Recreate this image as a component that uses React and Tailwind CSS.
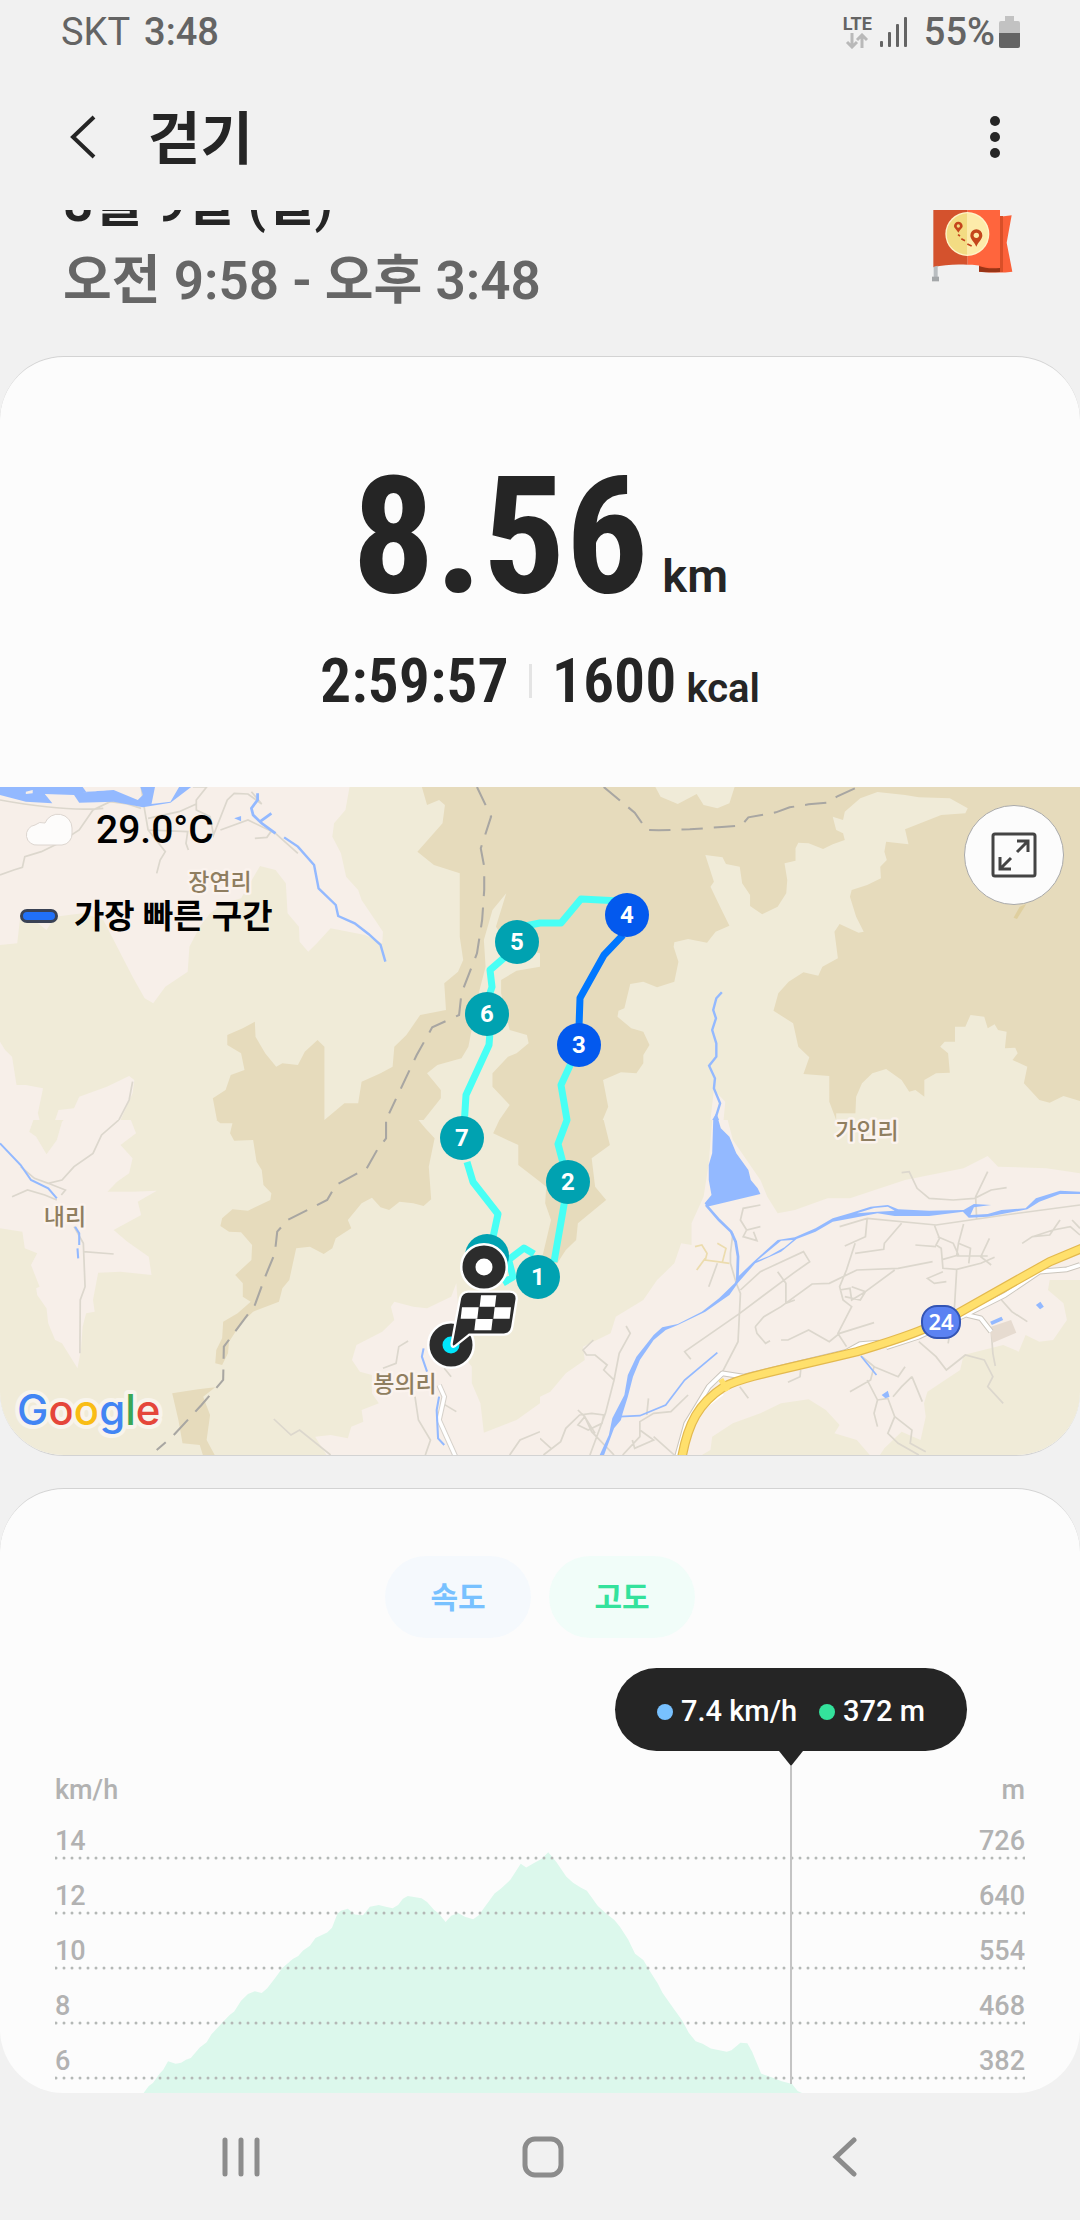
import React from "react";

const SANS = "font-[Roboto,'Noto_Sans_CJK_KR',sans-serif]";

const LIGHT = "#f0ebd8";
const TAN = "#e6dbbc";
const PINK = "#f7efe9";
const WATER = "#93b9ff";
const ROAD = "#dcd7cd";

function StatusBar() {
  return (
    <div className="flex h-16 shrink-0 items-center justify-between pr-[60px] pl-[61px] text-[38px] leading-none text-[#646464]">
      <div className="flex gap-[14px]">
        <span>SKT</span>
        <span className="font-medium">3:48</span>
      </div>
      <div className="flex items-center gap-2">
        <div className="flex flex-col items-center">
          <span className="text-lg leading-[18px] font-bold">LTE</span>
          <svg className="h-4 w-6" viewBox="0 0 24 16" fill="none" stroke="#b9b9b9" strokeWidth="3">
            <path d="M7 0v13M2 9l5 5 5-5M17 15V3M12 7l5-5 5 5" />
          </svg>
        </div>
        <svg className="h-8 w-7" viewBox="0 0 28 32" fill="#646464">
          <rect x="0" y="25" width="3" height="6" rx="1" />
          <rect x="8" y="16" width="3" height="15" rx="1" />
          <rect x="16" y="8" width="3" height="23" rx="1" />
          <rect x="24" y="1" width="3" height="30" rx="1" />
        </svg>
        <div className="flex items-center gap-1 pl-2">
          <span className="font-medium">55%</span>
          <svg className="h-8 w-[21px]" viewBox="0 0 21 32">
            <path d="M6 0h9v5h4a2 2 0 0 1 2 2v10H0V7a2 2 0 0 1 2-2h4z" fill="#c2c2c2" />
            <path d="M0 17h21v13a2 2 0 0 1-2 2H2a2 2 0 0 1-2-2z" fill="#646464" />
          </svg>
        </div>
      </div>
    </div>
  );
}

function AppBar() {
  return (
    <header className="flex h-[146px] shrink-0 items-start justify-between pr-[65px] pl-[56px] text-[#252525]">
      <div className="flex items-start gap-[38px]">
        <button type="button" aria-label="뒤로" className="mt-[46px] flex h-[54px] w-[54px] items-center justify-center">
          <svg className="h-[44px] w-[28px]" viewBox="0 0 28 44" fill="none" stroke="currentColor" strokeWidth="4">
            <path d="M25 2L4 22l21 20" />
          </svg>
        </button>
        <h1 className="mt-[36px] text-[57px] leading-[80px] font-semibold">걷기</h1>
      </div>
      <button type="button" aria-label="더보기" className="mt-[46px] flex h-[54px] w-[40px] items-center justify-center">
        <svg className="h-[44px] w-[12px]" viewBox="0 0 12 44" fill="currentColor">
          <circle cx="6" cy="6" r="5" />
          <circle cx="6" cy="22" r="5" />
          <circle cx="6" cy="38" r="5" />
        </svg>
      </button>
    </header>
  );
}

function Flag() {
  return (
    <svg className="h-[72px] w-[81px]" viewBox="96 60 243 216">
      <path d="M300 80l35-4-15 82 17 87c-30 4-60 3-100 0v-30h63z" fill="#fb6139" />
      <path d="M300 78h9v168h-9z" fill="#d94f28" />
      <path d="M237 228c20 8 40 8 63 6v12c-25 2-45 1-63-1z" fill="#993416" />
      <path d="M100 60h103v164c-40-2-70 0-103 8z" fill="#d4522d" />
      <path d="M203 60h97v174c-30-2-60-10-97-10z" fill="#ff653d" />
      <path d="M101 230l12-3v36h-12z" fill="#b9bdc0" />
      <path d="M96 260h21v14H96z" fill="#a4a7a9" />
      <circle cx="202" cy="132" r="66" fill="#fff3c8" />
      <path d="M202 70a62 62 0 0 0 0 124z" fill="#f3dc83" />
      <path d="M202 70a62 62 0 0 1 0 124z" fill="#fdebaa" />
      <path d="M175 128c-6-10-13-14-13-20a13 13 0 0 1 26 0c0 6-7 10-13 20z" fill="#c4461c" />
      <circle cx="175" cy="108" r="5" fill="#f3dc83" />
      <path d="M229 170c-9-18-18-22-18-34a18 18 0 0 1 36 0c0 12-9 16-18 34z" fill="#c4461c" />
      <circle cx="229" cy="136" r="8" fill="#fdebaa" />
      <path d="M174 134l6 4M184 146l11 6M202 162l13 6" stroke="#c4461c" strokeWidth="5" />
    </svg>
  );
}

function Heading() {
  return (
    <section className="-mt-[46px] flex shrink-0 items-end justify-between pr-[67px] pb-[36px] pl-[63px]">
      <div className="text-[53px] leading-[78px] font-semibold">
        <p className="text-[#252525]">8월 9일 (일)</p>
        <p className="text-[#666666]">오전 9:58 - 오후 3:48</p>
      </div>
      <div className="pb-[38px]">
        <Flag />
      </div>
    </section>
  );
}

function Summary() {
  return (
    <div className="flex flex-col items-center pt-[96px] pb-[60px] text-[#252525]">
      <div className="flex items-baseline gap-[14px]">
        <span className="font-['Roboto_Condensed',Roboto,sans-serif] text-[164px] leading-[166px] font-bold">8.56</span>
        <span className="text-[47px] leading-none font-semibold">km</span>
      </div>
      <div className="mt-[16px] flex items-center gap-[20px] font-semibold">
        <span className="font-['Roboto_Condensed',Roboto,sans-serif] text-[62px] leading-[92px]">2:59:57</span>
        <span className="h-[34px] w-[3px] bg-[#e4e4e4]" />
        <span className="flex items-baseline gap-[10px]">
          <span className="font-['Roboto_Condensed',Roboto,sans-serif] text-[62px] leading-[92px]">1600</span>
          <span className="text-[40px] leading-none">kcal</span>
        </span>
      </div>
    </div>
  );
}

function Tile({ x, y, height, viewHeight, top = 0, children }) {
  return (
    <svg x={x} y={y} width="540" height={height} viewBox={`0 ${top} 1568 ${viewHeight}`} preserveAspectRatio="none" fill="none">
      {children}
    </svg>
  );
}

function Terrain() {
  return (
    <>
      <Tile x="0" y="0" height="333" top={21} viewHeight={999}>
        <rect width="1568" height="1020" fill={LIGHT} />
        <path fill={PINK} d="M0 21H1015L1003 90 970 130 965 170 990 220 1005 290 1040 330 1050 360 1112 455 1110 490 1060 465 960 445 920 490 895 515 870 485 868 440 835 400 830 310 800 270 755 258 700 355 650 370 610 400 580 440 550 500 545 575 480 620 445 670 420 655 385 590 355 530 330 480 300 420 240 400 160 410 135 450 110 430 60 400 50 490 0 495z" />
        <path fill={PINK} d="M0 785L15 810 35 830 48 915 75 915 125 925 110 1000 115 1020 0 1020zM160 1020L170 990 215 985 230 950 310 920 375 888 390 900 385 940 350 1020z" />
        <path fill={TAN} d="M1225 21L1240 75 1275 60 1292 75 1285 130 1212 215 1260 255 1335 280 1335 470 1345 540 1330 575 1290 610 1295 690 1220 705 1180 765 1145 800 1140 860 1105 880 1050 905 1040 970 1000 970 942 1020 942 800 922 780 885 815 865 855 820 850 802 860 770 820 742 770 740 725 705 745 660 765 660 795 700 820 710 870 670 885 655 930 618 955 630 1020H1568V21z" />
        <path fill={LIGHT} d="M1470 340L1430 390 1405 480 1410 560 1390 640 1360 800 1340 835 1270 855 1240 880 1280 930 1280 955 1230 1020H1450L1480 975 1430 920 1430 880 1475 830 1500 820 1535 790 1530 765 1480 750 1455 640 1455 600 1500 572 1568 560V520L1480 500 1440 440z" />
        <g stroke={ROAD} strokeWidth="5">
          <path d="M0 60C80 75 200 95 300 85M0 285L40 270 65 262 72 230 120 215 170 190 230 150 270 90 320 65 370 72 410 85M410 21L420 90 430 150 480 215 465 240 455 280M430 150L545 155 540 190 547 210M560 21L600 21 570 60 570 90 610 110 620 165 660 60 680 40 720 42 760 72 730 35M640 150L720 120 800 160 865 220M740 175L775 172 790 150M430 115L520 95 570 72M385 905L375 960 345 1020" />
        </g>
        <path fill={WATER} d="M0 21H240L250 35 330 30 400 60 415 45 408 21H450L440 72 495 65 520 21H555L495 68 415 82 330 65 230 68 215 45 130 42 152 70 75 65 0 45z" />
        <path fill={PINK} d="M235 38L300 30 325 21H405L400 45 380 38 330 28zM75 35L95 30 95 40 75 42z" />
        <path fill={WATER} d="M680 115l20-7v16z" />
        <path stroke={WATER} strokeWidth="8" d="M748 40V60L730 85 735 105 760 130 800 160M755 125L788 100" />
        <path stroke={WATER} strokeWidth="7" d="M825 172L865 200 912 255 925 325 975 375 982 408 1030 430 1070 462 1105 495 1119 545" />
        <path stroke="#a8a6a2" strokeWidth="6" strokeDasharray="60 34" d="M1385 21L1426 110 1396 205 1406 260V330L1400 420 1385 520 1340 640 1333 705 1255 742 1210 825 1130 1000" />
      </Tile>

      <Tile x="540" y="0" height="333" top={21} viewHeight={999}>
        <rect width="1568" height="1020" fill={TAN} />
        <path fill={LIGHT} d="M335 21L350 50 400 72 455 42 475 75 515 85 550 70 565 21z" />
        <path fill={LIGHT} d="M850 110L880 120 885 95 930 55 980 36 1060 45 1100 52 1190 55 1242 85 1235 100 1165 105 1060 148 1070 193 1005 185 1000 215 1007 240 988 260 990 295 950 315 905 330 900 350 918 410 940 455 925 458 870 432 855 455 865 535 820 560 808 587 765 577 722 605 692 640 678 692 735 730 750 800 782 832 765 882 840 888 840 965 860 1020H915L918 950 935 910 965 880 1005 867 1050 900 1072 935 1090 930 1116 950V900L1150 880 1190 878 1185 820 1162 800 1175 785H1205V740H1235L1250 705 1290 710 1300 745 1320 733 1330 750 1355 755 1350 805 1380 803 1387 820 1372 840 1415 860 1405 910 1450 960 1480 968 1520 948 1568 963V1020H182L198 980 183 900 235 877 280 880 300 850V825L318 795 300 755 265 745 225 710 228 692 245 685 262 612 300 605 340 622 390 605 402 545 388 500 390 487 430 477 485 488 510 455 550 437 525 385 495 320 505 305 480 225 530 232 540 252 580 260 587 310 610 345V378L645 403 690 380 715 340 718 300 710 250 742 242V205L750 188 780 190 822 207 850 193 885 180 880 160 860 150z" />
        <path fill={LIGHT} d="M860 1000H920V1020H860z" />
        <path fill={PINK} d="M505 930L538 965 533 1020H495z" />
        <path stroke={WATER} strokeWidth="7" d="M528 637L512 655 503 690 511 715 500 750 512 790V830L491 857 508 895 505 925 523 970 508 1020" />
        <path fill={WATER} d="M500 1020L512 1000 520 1020z" />
        <path fill="#dfcf9f" d="M1412 372L1385 417 1375 413 1393 380z" />
        <path stroke="#a8a6a2" strokeWidth="6" strokeDasharray="62 32" d="M185 21L275 98 310 150 345 151 435 148 528 141 585 137 605 112 685 97 725 82 780 73 835 68 865 48 925 20" />
      </Tile>

      <Tile x="0" y="333" height="336" viewHeight={1008}>
        <rect width="1568" height="1050" fill={LIGHT} />
        <path fill={PINK} d="M0 0H97L85 35 105 50 135 103 165 60 180 5 185 0H380L395 40 350 75 385 115 375 160 340 185 312 215 385 215 455 212 400 245 410 285 330 330 370 365 432 410 440 465 350 455 285 458 270 540 275 575 250 580 240 620 235 690 225 745 180 670 160 660 140 610 135 565 108 525 105 505 115 500 90 435 108 400 72 385 65 335 0 325z" />
        <path fill={TAN} d="M628 0L640 10 675 10 668 40 680 62 735 60 745 125 760 150 765 195 788 220 785 240 720 272 675 268 645 295 640 318 665 335 700 337 732 375 730 420 683 465 705 490V530L728 545 690 580 648 605 645 655 628 690 625 730 645 735 662 700 665 665 700 610 735 575 810 545 820 505 840 480 860 385 900 380 940 402 965 385 975 355 1020 325 1010 300 1050 250 1080 233 1105 262 1130 270 1160 245 1200 250 1230 258 1252 238 1245 140 1262 55 1235 25 1215 0z" />
        <path fill={TAN} d="M1450 0L1432 40 1505 75V135L1568 185V0zM500 820L575 808 625 802 590 830 610 885 600 960 625 1008H590L580 975 530 970 518 900z" />
        <path fill={PINK} d="M1325 490L1310 530 1240 565 1200 560 1145 545 1135 560 1145 600 1110 635 1035 675 1022 720 1045 755 1080 765V820L1100 850 1050 870 1055 905 1020 920 1010 955 960 945 915 950 950 1008H1568V850L1500 900 1405 938 1395 850 1370 790V740L1340 700z" />
        <g stroke={ROAD} strokeWidth="5">
          <path d="M345 0L295 45 270 100 215 140 180 180 140 190 100 175 60 140M35 230L80 210 130 225 165 240M140 190L190 210 178 225M215 320L242 370 247 500 233 540 232 700M242 395L330 402M795 897L845 945 870 930 960 1005M1185 663L1158 680 1150 730 1112 745M1205 830L1215 900 1250 960 1235 1005M1290 745L1310 770M1285 850L1325 875M1480 1005L1510 960 1568 935" />
          <path strokeWidth="16" stroke="#d6d1ca" d="M1275 795L1290 830 1275 900 1322 1008" />
          <path strokeWidth="10" stroke="#fff" d="M1275 795L1290 830 1275 900 1322 1008" />
        </g>
        <path stroke={WATER} strokeWidth="6" d="M0 70L60 135 90 180 140 205 165 235M218 320L230 340V375M225 385L227 415M1230 685L1225 710 1240 755M1275 830L1268 870 1272 955 1290 975" />
        <path stroke="#a8a6a2" strokeWidth="6" strokeDasharray="62 32" d="M1121 5V55L1095 90 1065 145 975 195 950 240 835 300 805 335 798 400 770 470 740 555 650 680 648 780 585 855 500 950 455 990" />
      </Tile>

      <Tile x="540" y="333" height="336" viewHeight={1008}>
        <rect width="1568" height="1050" fill={LIGHT} />
        <path fill={TAN} d="M0 0H185L203 75 150 115 160 200 192 240 110 310 105 360 75 390 50 430 0 440 32 300 15 250 18 200 0 185z" />
        <path fill={PINK} d="M0 830L30 815 75 760 130 720 125 680 205 640 220 590 300 540 340 480 390 430 410 370 440 375V310L475 230 490 130 500 0H545L560 60 640 180 660 230 690 280 740 270 835 235 900 235 1060 180 1230 145 1300 108 1330 140 1470 145 1568 160V480H1480L1475 510 1520 550 1530 600 1490 660 1450 665 1410 645 1390 695 1345 675 1230 705 1220 750 1125 815 1115 850 1120 890 1105 960 1050 935 1000 985 985 1008H960L920 960 855 940 870 915 830 870 780 838 700 850 640 880 560 910 500 950 495 990 465 1008H0z" />
        <g stroke={ROAD} strokeWidth="5">
          <path d="M1050 158L1072 155 1095 205 1130 235 1200 240 1262 235 1310 210 1355 203M1300 155L1265 230 1268 300M870 320L950 295 1150 315 1350 285 1568 255M950 295L945 350 885 378M1050 310L1000 370 998 388 915 400M1145 315L1160 355 1150 375 1165 385 1170 445 1210 448 1280 430 1320 412M1230 312L1215 370 1210 405M1155 350L1200 370 1215 405 1170 418M1215 370L1250 385 1245 430M1305 355L1280 410 1310 435M1090 375L1150 380M1210 408H1300M640 255L590 265 582 300 600 330 640 320M600 330L590 350 630 362 620 335M560 340L553 400V430L570 490 582 520 575 665 530 755M582 510L640 455 765 395 783 425 735 460 580 580 420 695 438 718M690 455L714 490V550L740 540M625 620L650 590 700 560 790 492 840 490 920 450 1040 445 1140 425M915 370L890 450 870 500 880 540 905 560 865 640 890 680M870 510L900 505 905 540 945 515 1030 450M905 500L945 515 930 540 885 530M625 620L630 640 655 670 668 662M700 660L720 660 780 630 840 665 870 640 970 608M1210 448L1203 570 1185 670M1170 455L1125 475 1145 490 1180 485M155 660L125 690 135 705 160 705 195 735 185 750 215 780 230 700 262 640 250 618M215 780L190 880 145 1005M0 955L32 985M10 1005L60 965 75 925 115 885 150 880 185 885 180 910 140 930 110 915 130 890 150 935 215 1005M110 870L130 890 160 940M240 1005L290 950V905L330 880 380 875 430 825M315 835L310 885M290 930L330 960 275 985 268 960M330 950L390 1005M515 430L490 500M580 800L605 835M757 750L755 770 720 787M935 710L970 740 960 780 900 815M970 740L1040 770 1060 740M950 780L980 840 970 880 980 920M980 840L1010 835 1030 890 1010 940 1040 970 1100 1005M1030 890L1080 930 1075 970 1120 995M1080 770L1050 800 1025 830M1080 770L1110 845M1100 665L1150 710 1180 750 1235 705 1290 720 1315 770 1300 800 1345 850M1310 630L1315 700 1322 738M1340 540L1370 575 1415 605M1400 370L1430 350 1480 345 1510 300M1430 350L1490 330 1540 320 1568 345M1545 300L1568 325" />
          <path stroke="#ecdcae" d="M450 380L470 375 485 400 480 420 515 425 550 430M515 370L540 385 530 425M480 415L455 450" />
        </g>
        <path fill="#e6dbd0" d="M1305 622L1368 600 1383 638 1315 668z" />
        <path fill={WATER} d="M503 0H518L525 25 550 50 570 100 605 150 612 180 632 205 640 222 485 260 478 250 498 225 490 180 490 135 500 100z" />
        <path stroke={WATER} strokeWidth="8" d="M482 255L520 300 555 335 568 365 575 410 573 480" />
        <path fill={WATER} d="M575 470L620 425 690 360 740 352 800 325 850 295 905 278 960 260 1010 255 1040 268 1130 272 1230 270 1260 252 1310 255 1260 262 1250 285 1300 282 1340 270 1410 265 1440 235 1510 212 1568 215V222L1510 222 1450 245 1415 268 1300 290 1245 293 1228 275 1130 288 1030 288 980 280 905 295 850 305 800 335 745 357 700 395 625 430 575 488 550 525 480 575 400 615 365 630 330 660 290 720 270 770 255 830 240 880 235 900 215 925 185 1008H172L200 945 210 895 245 825 255 765 280 710 330 645 355 622 400 612 470 575 520 535 565 490z" />
        <path fill={PINK} d="M630 422L700 362 735 360 710 382 665 408zM920 280L970 264 1010 260 1030 272 980 275z" />
        <path stroke={WATER} strokeWidth="5" d="M230 890L290 887 365 855 420 780 515 698M932 708L977 765" />
        <path fill={WATER} d="M1440 555L1453 545 1463 560 1452 568zM992 825L1010 812 1015 830 1003 835zM1307 605L1340 590 1345 600 1312 615z" />
        <g strokeLinejoin="round">
          <path stroke="#cbc6bd" strokeWidth="17" d="M398 1010L425 910 455 860 490 800 530 760 590 770 890 695 930 672 985 668M1005 682L1100 650 1240 582 1350 525 1450 455 1530 448 1568 435M1240 585L1280 595 1310 635" />
          <path stroke="#fff" strokeWidth="11" d="M398 1010L425 910 455 860 490 800 530 760 590 770 890 695 930 672 985 668M1005 682L1100 650 1240 582 1350 525 1450 455 1530 448 1568 435M1240 585L1280 595 1310 635M530 820L480 860" />
          <path stroke="#e3b94f" strokeWidth="28" d="M412 1012C430 910 460 850 535 800C590 770 700 750 920 695C1100 640 1130 620 1200 588L1480 425 1580 382" />
          <path stroke="#ffe06c" strokeWidth="21" d="M412 1012C430 910 460 850 535 800C590 770 700 750 920 695C1100 640 1130 620 1200 588L1480 425 1580 382" />
          <path stroke="#ffe06c" strokeWidth="16" d="M525 778L545 812" />
        </g>
      </Tile>
    </>
  );
}

const PLACES = [
  { name: "장연리", x: 220, y: 103 },
  { name: "내리", x: 65, y: 438 },
  { name: "봉의리", x: 405, y: 605 },
  { name: "가인리", x: 867, y: 352 },
];

const MARKERS = [
  { n: "8", x: 487, y: 469, fill: "#00a2b1" },
  { n: "7", x: 462, y: 351, fill: "#00a2b1" },
  { n: "6", x: 487, y: 227, fill: "#00a2b1" },
  { n: "5", x: 517, y: 155, fill: "#00a2b1" },
  { n: "4", x: 627, y: 128, fill: "#0359ee" },
  { n: "3", x: 579, y: 258, fill: "#0359ee" },
  { n: "2", x: 568, y: 395, fill: "#00a2b1" },
  { n: "1", x: 538, y: 490, fill: "#00a2b1" },
];

function Route() {
  return (
    <>
      <g fill="none" stroke="#48fff5" strokeWidth="7" strokeLinejoin="round">
        <path d="M620 114L581 112 561 136 540 136 520 140M505 170L490 183 492 200 487 215M490 245L489 258 466 308 464 340M467 375L473 395 498 427 492 455" />
        <path d="M507 474L524 461 534 467M509 474L513 490 503 496M554 475L568 395 558 357 567 333 561 298 573 272" />
        <path stroke="#0077ff" d="M623 148L604 168 580 211 579 240" />
      </g>
      {MARKERS.map((m) => (
        <g key={m.n}>
          <circle cx={m.x} cy={m.y} r="22" fill={m.fill} />
          <text x={m.x} y={m.y + 8} textAnchor="middle" fill="#fff" className="text-[24px] font-bold">
            {m.n}
          </text>
        </g>
      ))}
      <circle cx="484" cy="480" r="16" fill="#fff" stroke="#fff" strokeWidth="16" />
      <circle cx="484" cy="480" r="15" fill="#fff" stroke="#2c2c2c" strokeWidth="13" />
      <circle cx="451" cy="558" r="16" fill="#fff" stroke="#fff" strokeWidth="16" />
      <circle cx="451" cy="558" r="15" fill="#00e6fb" stroke="#2c2c2c" strokeWidth="13" />
      <g transform="translate(400 393) scale(.3333)">
        <path d="M204 335H330Q352 337 350 358L337 440Q334 462 312 464H208L164 499Q154 504 155 490L180 355Q184 337 204 335z" fill="#2c2c2c" stroke="#fff" strokeWidth="7" />
        <path d="M243 346h46l-4 34h-46zM186 382h50l-4 34h-50zM284 382h49l-4 34h-49zM227 417h51l-4 34h-51z" fill="#fff" />
      </g>
    </>
  );
}

function GoogleMark() {
  return (
    <text x="17" y="638" stroke="#f8f4ec" strokeWidth="8" strokeLinejoin="round" className="font-[Inter,sans-serif] text-[42px] font-medium [paint-order:stroke]">
      <tspan fill="#4285f4">G</tspan>
      <tspan fill="#e5463a">o</tspan>
      <tspan fill="#f9bd15">o</tspan>
      <tspan fill="#4285f4">g</tspan>
      <tspan fill="#3aa757">l</tspan>
      <tspan fill="#e5463a">e</tspan>
    </text>
  );
}

function RouteMap() {
  return (
    <div className="relative">
      <svg className="block h-auto w-full" viewBox="0 0 1080 668" role="img" aria-label="지도">
        <Terrain />
        {PLACES.map((p) => (
          <text key={p.name} x={p.x} y={p.y} textAnchor="middle" fill="#8f7e60" stroke="#fbf3ee" strokeWidth="5" strokeLinejoin="round" className="text-[23px] font-medium [paint-order:stroke]">
            {p.name}
          </text>
        ))}
        <rect x="922" y="519" width="38" height="32" rx="15" fill="#5b82f2" stroke="#3354b4" strokeWidth="2" />
        <text x="941" y="543" textAnchor="middle" fill="#fff" className="font-['Noto_Sans',sans-serif] text-[22px] font-semibold">24</text>
        <Route />
        <GoogleMark />
      </svg>
      <div className="absolute top-[20px] left-[20px] flex flex-col gap-[40px] text-black">
        <div className="flex h-[46px] items-center gap-[22px]">
          <svg className="h-[34px] w-[54px]" viewBox="0 0 54 34">
            <path d="M18 32h24a11 11 0 0 0 10-12V15A14 14 0 0 0 25 10A10 10 0 0 0 15 12A10 10 0 0 0 18 32z" fill="#fdfcfb" stroke="#ddd6d0" strokeWidth="1" />
          </svg>
          <span className="text-[39px] leading-none font-medium">29.0°C</span>
        </div>
        <div className="flex h-[46px] items-center gap-[16px]">
          <span className="h-[14px] w-[38px] rounded-full border-[3px] border-[#3a4254] bg-[#2170f7]" />
          <span className="text-[33px] leading-none font-bold">가장 빠른 구간</span>
        </div>
      </div>
      <button
        type="button"
        aria-label="전체 화면"
        className="absolute top-[18px] right-[16px] flex h-[100px] w-[100px] items-center justify-center rounded-full border border-[#a9a9a9] bg-[#fcfcfc]"
      >
        <svg className="h-[46px] w-[46px]" viewBox="0 0 46 46" fill="none" stroke="#444" strokeWidth="3">
          <rect x="2" y="2" width="42" height="42" rx="2" />
          <path d="M26 20L36 10M26 9h11v11M20 26L10 36M9 25v12h11" />
        </svg>
      </button>
    </div>
  );
}

const GRID_ROWS = [
  ["14", "726"],
  ["12", "640"],
  ["10", "554"],
  ["8", "468"],
  ["6", "382"],
];

function Chart() {
  return (
    <div className="relative mt-[30px] font-medium text-[#b2b2b2]">
      <div className="flex h-[137px] items-end justify-between px-[55px] text-[27px] leading-[30px]">
        <span>km/h</span>
        <span>m</span>
      </div>
      <div className="relative h-[288px]">
        <svg className="absolute inset-0 h-full w-full" viewBox="0 691 1568 608" preserveAspectRatio="none">
          <path
            fill="#dcf8ec"
            d="M208 1300L216 1284 222 1278 232 1258 237 1250 244 1232 255 1237 263 1235 270 1229 277 1225 290 1203 300 1192 307 1175 325 1147 333 1135 340 1127 350 1104 360 1090 370 1084 380 1088 388 1078 400 1055 410 1035 425 1016 433 1010 440 998 450 988 458 972 475 960 482 950 490 920 495 914 505 910 515 922 527 924 537 906 550 902 560 906 570 909 578 902 585 889 592 883 612 888 620 896 630 912 637 920 647 938 655 925 665 919 675 927 687 932 695 924 718 878 727 868 741 849 756 815 764 823 776 813 786 805 796 791 808 812 822 842 832 855 843 865 852 872 868 904 880 920 892 934 900 948 912 975 922 1005 934 1018 945 1045 955 1068 962 1088 980 1125 990 1145 1000 1172 1010 1190 1020 1195 1032 1205 1055 1212 1062 1209 1075 1193 1085 1194 1092 1212 1105 1258 1120 1266 1135 1274 1150 1280 1158 1295 1166 1300z"
          />
        </svg>
        <div className="relative grid h-[275px] grid-rows-5 px-[55px]">
          {GRID_ROWS.map(([speed, height]) => (
            <div key={speed} className="flex flex-col justify-end text-[27px] leading-[30px]">
              <div className="flex justify-between">
                <span>{speed}</span>
                <span>{height}</span>
              </div>
              <svg className="h-[4px] w-full shrink-0">
                <line x1="1" y1="2" x2="100%" y2="2" stroke="#b4b8b6" strokeWidth="3" strokeLinecap="round" strokeDasharray="0 8" />
              </svg>
            </div>
          ))}
        </div>
      </div>
      <div role="tooltip" className="absolute top-0 bottom-[9px] left-[791px] flex -translate-x-1/2 flex-col items-center">
        <div className="flex h-[83px] items-center gap-[22px] rounded-full bg-[#252525] px-[42px] pt-[5px] text-[29px] whitespace-nowrap text-white">
          <span className="flex items-center gap-2">
            <span className="h-4 w-4 rounded-full bg-[#78c1ff]" />
            7.4 km/h
          </span>
          <span className="flex items-center gap-2">
            <span className="h-4 w-4 rounded-full bg-[#34e29c]" />
            372 m
          </span>
        </div>
        <svg className="h-[15px] w-[24px] shrink-0" viewBox="0 0 24 15">
          <path d="M0 0h24L12 15z" fill="#252525" />
        </svg>
        <span className="w-[2px] flex-1 bg-[#c4c4c4]" />
      </div>
    </div>
  );
}

export default function App() {
  return (
    <div className={`${SANS} flex h-screen flex-col overflow-hidden bg-[#f1f1f1]`}>
      <StatusBar />
      <AppBar />
      <main className="flex min-h-0 flex-1 flex-col overflow-hidden rounded-b-[64px]">
        <Heading />
        <section className="shrink-0 overflow-hidden rounded-[64px] border-t border-b border-[#d3d3d3] bg-[#fcfcfc]">
          <Summary />
          <RouteMap />
        </section>
        <section className="mt-8 shrink-0 rounded-t-[64px] border-t border-[#d3d3d3] bg-[#fcfcfc] pt-[67px]">
          <div className="flex justify-center gap-[18px] text-[30px] font-bold">
            <button type="button" className="h-[82px] w-[146px] rounded-full bg-[#f5f9fd] text-[#78c1ff]">속도</button>
            <button type="button" className="h-[82px] w-[146px] rounded-full bg-[#f1fdf9] text-[#34e29c]">고도</button>
          </div>
          <Chart />
        </section>
      </main>
      <nav className="grid h-[127px] shrink-0 grid-cols-3 items-center pr-[84px] pl-[90px] text-[#8c8c8c]">
        <button type="button" aria-label="최근 앱" className="flex justify-center">
          <svg className="h-[40px] w-[38px]" viewBox="0 0 38 40" stroke="currentColor" strokeWidth="5" strokeLinecap="round">
            <path d="M3 3v34M19 3v34M35 3v34" />
          </svg>
        </button>
        <button type="button" aria-label="홈" className="flex justify-center">
          <svg className="h-[42px] w-[42px]" viewBox="0 0 42 42" fill="none" stroke="currentColor" strokeWidth="5">
            <rect x="3" y="3" width="36" height="36" rx="10" />
          </svg>
        </button>
        <button type="button" aria-label="뒤로 가기" className="flex justify-center">
          <svg className="h-[40px] w-[26px]" viewBox="0 0 26 40" fill="none" stroke="currentColor" strokeWidth="5" strokeLinecap="round">
            <path d="M22 3L4 20l18 17" />
          </svg>
        </button>
      </nav>
    </div>
  );
}
